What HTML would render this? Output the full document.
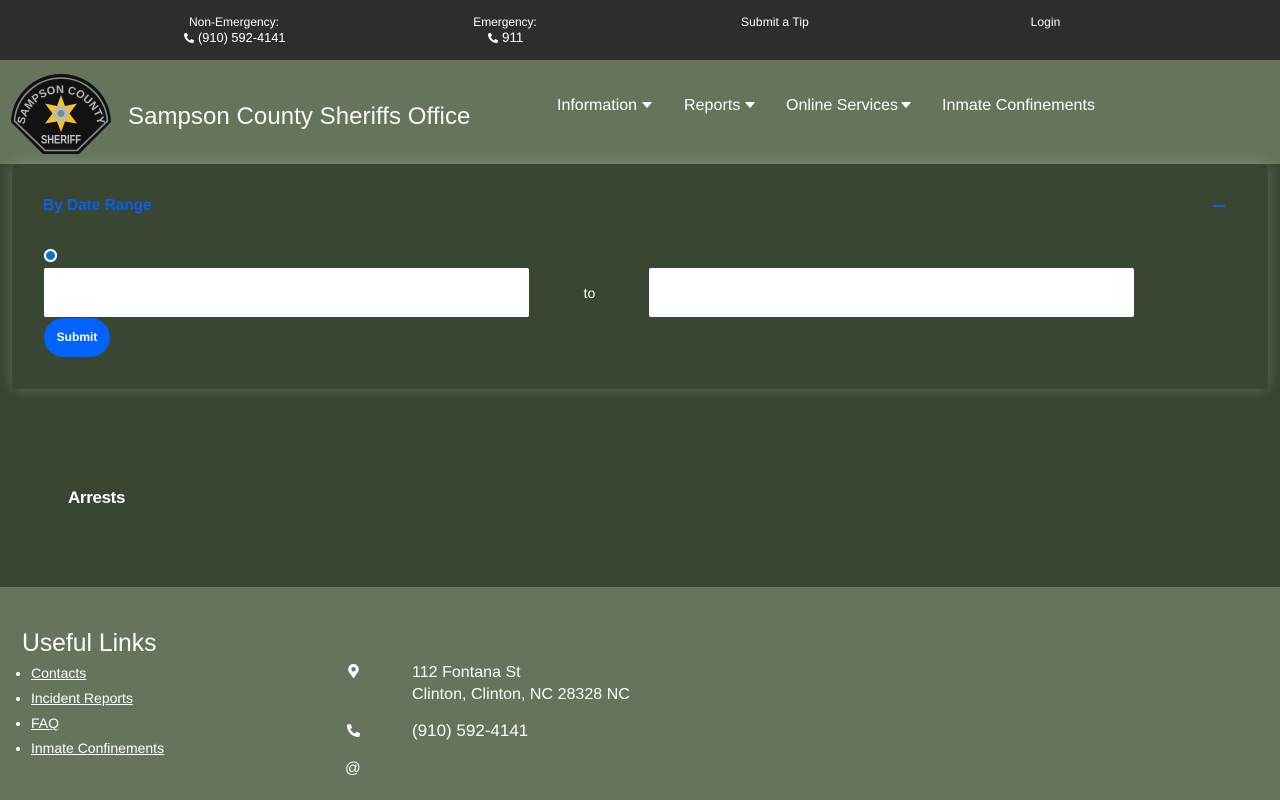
<!DOCTYPE html>
<html lang="en">
<head>
<meta charset="utf-8">
<title>Sampson County Sheriffs Office</title>
<style>
html,body{margin:0;padding:0}
body{width:1280px;height:800px;overflow:hidden;position:relative;background:#374531;font-family:"Liberation Sans",Arial,sans-serif;color:#fff}
a{color:#fff}
.t{position:absolute;white-space:nowrap}
.c{text-align:center;transform:translateX(-50%)}
#top{position:absolute;left:0;top:0;width:1280px;height:60px;background:#2d2d2d}
#hdr{position:absolute;left:0;top:60px;width:1280px;height:104px;background:#65745a}
#ftr{position:absolute;left:0;top:587px;width:1280px;height:213px;background:#65745a}
#card{position:absolute;left:12px;top:164px;width:1256px;height:225px;background:#384632;border-radius:4px;box-shadow:0 0 14px rgba(255,255,255,.22)}
.inp{position:absolute;top:268px;width:485px;height:49px;background:#fff;border-radius:2px;border:0;padding:0;margin:0}
#btn{position:absolute;left:44px;top:318px;width:66px;height:39px;border:0;border-radius:20px;background:#0062ff;color:#fff;font:bold 12px/39px "Liberation Sans",Arial,sans-serif;padding:0;text-align:center}
#radio{position:absolute;left:44px;top:249px;width:9px;height:9px;border:2px solid #fff;border-radius:50%;background:#0a6fc9;box-shadow:0 0 0 .5px #0a6fc9}
svg{position:absolute;display:block}
ul{position:absolute;left:0;top:661px;margin:0;padding:0 0 0 31px;font-size:14px;line-height:25px}
</style>
</head>
<body>
<div id="top"></div>
<div id="hdr"></div>
<div id="ftr"></div>
<div id="card"></div>

<div class="t c" style="left:234px;top:14px;font-size:12px;line-height:16px">Non-Emergency:</div>
<svg style="left:184px;top:33px" width="10" height="10" viewBox="0 0 512 512"><path fill="#fff" d="M497.39 361.8l-112-48a24 24 0 0 0-28 6.9l-49.6 60.6A370.66 370.66 0 0 1 130.6 204.11l60.6-49.6a23.94 23.94 0 0 0 6.9-28l-48-112A24.16 24.16 0 0 0 122.6.61l-104 24A24 24 0 0 0 0 48c0 256.5 207.9 464 464 464a24 24 0 0 0 23.4-18.6l24-104a24.29 24.29 0 0 0-14.01-27.6z"/></svg>
<div class="t" style="left:198px;top:30px;font-size:12.8px;line-height:16px">(910) 592-4141</div>
<div class="t c" style="left:505px;top:14px;font-size:12px;line-height:16px;letter-spacing:-.06px">Emergency:</div>
<svg style="left:488px;top:33px" width="10" height="10" viewBox="0 0 512 512"><path fill="#fff" d="M497.39 361.8l-112-48a24 24 0 0 0-28 6.9l-49.6 60.6A370.66 370.66 0 0 1 130.6 204.11l60.6-49.6a23.94 23.94 0 0 0 6.9-28l-48-112A24.16 24.16 0 0 0 122.6.61l-104 24A24 24 0 0 0 0 48c0 256.5 207.9 464 464 464a24 24 0 0 0 23.4-18.6l24-104a24.29 24.29 0 0 0-14.01-27.6z"/></svg>
<div class="t" style="left:502px;top:30px;font-size:13.400px;line-height:16px">911</div>
<div class="t c" style="left:775px;top:14px;font-size:12px;line-height:16px;letter-spacing:.1px">Submit a Tip</div>
<div class="t c" style="left:1045.500px;top:14px;font-size:12px;line-height:16px;letter-spacing:.1px">Login</div>

<svg style="left:0;top:60px" width="130" height="104" viewBox="0 60 130 104">
  <defs><path id="arc" d="M24 130 A37 37 0 0 1 98 130"/></defs>
  <path d="M11 122 C12 94 35 74 61 74 C87 74 110 94 111 122 L79 154 L43 154 Z" fill="#111"/>
  <path d="M14.500 121 C16 97 37 78 61 78 C85 78 106 97 107.500 121 L77 150.500 L45 150.500 Z" fill="#121212" stroke="#8d8d8d" stroke-width="1.600"/>
  <text font-family="Liberation Sans,Arial,sans-serif" font-size="11" font-weight="bold" fill="#b5b5b5" text-anchor="middle"><textPath href="#arc" startOffset="50%">SAMPSON COUNTY</textPath></text>
  <polygon points="61,95 65,106 77,103.500 69.500,113.500 77,123.500 65,121.500 61,132 57,121.500 45,123.500 52.500,113.500 45,103.500 57,106" fill="#f3c22f"/>
  <circle cx="61" cy="113.500" r="7.500" fill="#b9bdb8"/>
  <circle cx="61" cy="113.500" r="3.500" fill="#7d8a80"/>
  <text x="61" y="143.500" text-anchor="middle" font-family="Liberation Sans,Arial,sans-serif" font-size="11.500" font-weight="bold" fill="#c4c4c4" textLength="40" lengthAdjust="spacingAndGlyphs">SHERIFF</text>
</svg>

<div class="t" style="left:128px;top:102px;font-size:24px;line-height:30px;letter-spacing:.06px;color:#f7f7f2">Sampson County Sheriffs Office</div>

<div class="t" style="left:557px;top:96px;font-size:16px;line-height:20px">Information</div>
<svg style="left:642px;top:102px" width="10" height="6" viewBox="0 0 10 6"><path fill="#fff" d="M.8 0h8.400q.8 0 .4.800L5.500 5.500q-.5.500-1 0L.4.800Q0 0 .8 0z"/></svg>
<div class="t" style="left:684px;top:96px;font-size:16px;line-height:20px;letter-spacing:.05px">Reports</div>
<svg style="left:745px;top:102px" width="10" height="6" viewBox="0 0 10 6"><path fill="#fff" d="M.8 0h8.400q.8 0 .4.800L5.500 5.500q-.5.500-1 0L.4.800Q0 0 .8 0z"/></svg>
<div class="t" style="left:786px;top:96px;font-size:16px;line-height:20px">Online Services</div>
<svg style="left:901px;top:102px" width="10" height="6" viewBox="0 0 10 6"><path fill="#fff" d="M.8 0h8.400q.8 0 .4.800L5.500 5.500q-.5.500-1 0L.4.800Q0 0 .8 0z"/></svg>
<div class="t" style="left:942px;top:96px;font-size:16px;line-height:20px;letter-spacing:.05px">Inmate Confinements</div>

<div class="t" style="left:43px;top:196px;font-size:15.400px;font-weight:bold;line-height:20px;color:#0a5ee8">By Date Range</div>
<div style="position:absolute;left:1213px;top:205px;width:12px;height:2px;background:#0a5ee8"></div>
<div id="radio"></div>
<div class="inp" style="left:44px"></div>
<div class="t c" style="left:589.500px;top:285px;font-size:14px;line-height:16px">to</div>
<div class="inp" style="left:649px"></div>
<button id="btn">Submit</button>

<div class="t" style="left:68px;top:488px;font-size:17px;font-weight:bold;line-height:20px;letter-spacing:-.35px">Arrests</div>

<div class="t" style="left:22px;top:629px;font-size:24.700px;line-height:30px;color:#fbfbf7">Useful Links</div>
<ul>
<li><a href="#">Contacts</a></li>
<li><a href="#">Incident Reports</a></li>
<li><a href="#">FAQ</a></li>
<li><a href="#">Inmate Confinements</a></li>
</ul>

<svg style="left:348px;top:664px" width="11" height="14" viewBox="0 0 384 512"><path fill="#fff" d="M172.268 501.67C26.97 291.031 0 269.413 0 192 0 85.961 85.961 0 192 0s192 85.961 192 192c0 77.413-26.97 99.031-172.268 309.670-9.535 13.774-29.930 13.773-39.464 0zM192 272c44.183 0 80-35.817 80-80s-35.817-80-80-80-80 35.817-80 80 35.817 80 80 80z"/></svg>
<div class="t" style="left:412px;top:662px;font-size:16px;line-height:22px;letter-spacing:.03px;color:#fbfbf7">112 Fontana St<br>Clinton, Clinton, NC 28328 NC</div>
<svg style="left:347px;top:724px" width="13" height="13" viewBox="0 0 512 512"><path fill="#fff" d="M497.39 361.8l-112-48a24 24 0 0 0-28 6.9l-49.6 60.6A370.66 370.66 0 0 1 130.6 204.11l60.6-49.6a23.94 23.94 0 0 0 6.9-28l-48-112A24.16 24.16 0 0 0 122.6.61l-104 24A24 24 0 0 0 0 48c0 256.5 207.9 464 464 464a24 24 0 0 0 23.4-18.6l24-104a24.29 24.29 0 0 0-14.01-27.6z"/></svg>
<div class="t" style="left:412px;top:720px;font-size:17px;line-height:22px;color:#fbfbf7">(910) 592-4141</div>
<div class="t" style="left:345px;top:759px;font-size:15.500px;line-height:20px">@</div>
</body>
</html>
